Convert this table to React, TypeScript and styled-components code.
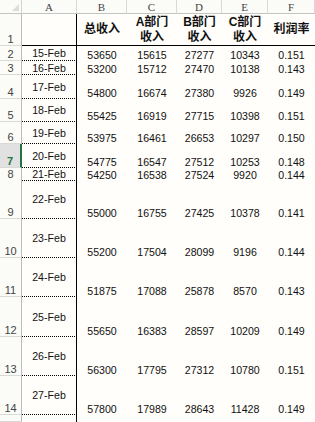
import styled, { createGlobalStyle } from 'styled-components';

const GlobalStyle = createGlobalStyle`
  html, body {
    margin: 0;
    padding: 0;
    background: #fffefa;
  }
  * {
    box-sizing: border-box;
  }
`;

const COLS = '22px 55px 50px 50px 45px 46px 1fr';

const Sheet = styled.div`
  width: 315px;
  height: 422px;
  overflow: hidden;
  background: #fffefa;
  font-family: 'Liberation Sans', Arial, sans-serif;
  color: #111;
`;

const Row = styled.div<{ $h: number }>`
  display: grid;
  grid-template-columns: ${COLS};
  height: ${(p) => p.$h}px;
`;

const Corner = styled.div`
  position: relative;
  border-right: 1px solid #d4d4d4;
  border-bottom: 1px solid #c4c4c4;
  background: #fbfbf8;
  &::after {
    content: '';
    position: absolute;
    right: 2px;
    bottom: 2px;
    border-style: solid;
    border-width: 0 0 7px 7px;
    border-color: transparent transparent #dcdcdc transparent;
  }
`;

const ColHead = styled.div`
  display: flex;
  align-items: center;
  justify-content: center;
  border-right: 1px solid #d8d8d8;
  border-bottom: 1px solid #c4c4c4;
  background: #fbfbf8;
  font-family: 'Liberation Serif', 'DejaVu Serif', serif;
  font-size: 11px;
  color: #444;
`;

const RowNum = styled.div<{ $selected?: boolean }>`
  display: flex;
  align-items: flex-end;
  justify-content: center;
  border-right: ${(p) => (p.$selected ? '2px solid #217346' : '1px solid #bdbdbd')};
  border-bottom: 1px solid #d9d9d9;
  background: ${(p) => (p.$selected ? '#e1e1e1' : '#fbfbf8')};
  font-size: 11px;
  line-height: 11px;
  color: ${(p) => (p.$selected ? '#217346' : '#444')};
  font-weight: ${(p) => (p.$selected ? 700 : 400)};
  overflow: hidden;
`;

const DateCell = styled.div<{ $last?: boolean }>`
  display: flex;
  align-items: center;
  justify-content: center;
  border-right: 1px solid #000;
  border-bottom: ${(p) => (p.$last ? 'none' : '1px dotted #000')};
  font-size: 10.6px;
  line-height: 12px;
  overflow: visible;
  white-space: nowrap;
`;

const NumCell = styled.div`
  display: flex;
  align-items: flex-end;
  justify-content: center;
  font-size: 10.6px;
  line-height: 12px;
  white-space: nowrap;
`;

const TitleBlank = styled.div`
  border-right: 1px solid #000;
  border-bottom: 1px solid #000;
`;

const TitleCell = styled.div`
  display: flex;
  align-items: center;
  justify-content: center;
  text-align: center;
  border-bottom: 1px solid #000;
  font-family: 'Liberation Sans', 'Noto Sans CJK SC', sans-serif;
  font-weight: 700;
  font-size: 12px;
  line-height: 15px;
  color: #111;
`;

const letters = ['A', 'B', 'C', 'D', 'E', 'F'];

const titles: string[][] = [
  ['总收入'],
  ['A部门', '收入'],
  ['B部门', '收入'],
  ['C部门', '收入'],
  ['利润率'],
];

type DataRow = [string, number, number, number, number, string, number];

const data: DataRow[] = [
  ['15-Feb', 53650, 15615, 27277, 10343, '0.151', 15],
  ['16-Feb', 53200, 15712, 27470, 10138, '0.143', 14],
  ['17-Feb', 54800, 16674, 27380, 9926, '0.149', 24],
  ['18-Feb', 55425, 16919, 27715, 10398, '0.151', 23],
  ['19-Feb', 53975, 16461, 26653, 10297, '0.150', 22],
  ['20-Feb', 54775, 16547, 27512, 10253, '0.148', 24],
  ['21-Feb', 54250, 16538, 27524, 9920, '0.144', 12],
  ['22-Feb', 55000, 16755, 27425, 10378, '0.141', 39],
  ['23-Feb', 55200, 17504, 28099, 9196, '0.144', 39],
  ['24-Feb', 51875, 17088, 25878, 8570, '0.143', 39],
  ['25-Feb', 55650, 16383, 28597, 10209, '0.149', 40],
  ['26-Feb', 56300, 17795, 27312, 10780, '0.151', 39],
  ['27-Feb', 57800, 17989, 28643, 11428, '0.149', 39],
];

export default function App() {
  return (
    <>
      <GlobalStyle />
      <Sheet>
        <Row $h={14}>
          <Corner />
          {letters.map((l) => (
            <ColHead key={l}>{l}</ColHead>
          ))}
        </Row>
        <Row $h={32}>
          <RowNum>1</RowNum>
          <TitleBlank />
          {titles.map((t, i) => (
            <TitleCell key={i}>
              <div>
                {t.map((line) => (
                  <div key={line}>{line}</div>
                ))}
              </div>
            </TitleCell>
          ))}
        </Row>
        {data.map(([date, total, a, b, c, rate, h], i) => (
          <Row $h={h} key={date}>
            <RowNum $selected={i === 5}>{i + 2}</RowNum>
            <DateCell>{date}</DateCell>
            <NumCell>{total}</NumCell>
            <NumCell>{a}</NumCell>
            <NumCell>{b}</NumCell>
            <NumCell>{c}</NumCell>
            <NumCell>{rate}</NumCell>
          </Row>
        ))}
        <Row $h={7}>
          <RowNum />
          <DateCell $last />
        </Row>
      </Sheet>
    </>
  );
}
